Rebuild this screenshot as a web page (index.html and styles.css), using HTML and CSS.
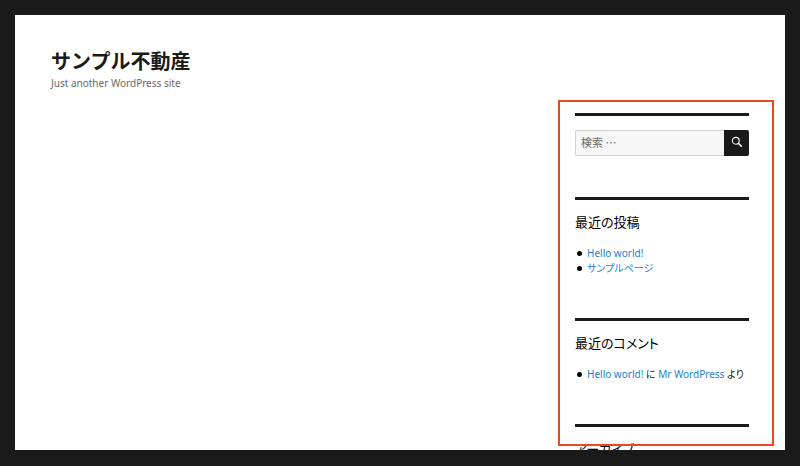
FILE: index.html
```html
<!DOCTYPE html>
<html lang="ja">
<head>
<meta charset="utf-8">
<title>サンプル不動産</title>
<link rel="stylesheet" href="styles.css">
</head>
<body>
<div class="page">
	<header class="site-header">
		<h1 class="site-title">サンプル不動産</h1>
		<p class="site-desc">Just another WordPress site</p>
	</header>
	<aside class="sidebar">
		<section class="widget widget-search">
			<form class="search">
				<input class="search-input" type="text" placeholder="検索 …">
				<button class="search-btn" type="button" aria-label="検索">
					<svg width="12" height="12" viewBox="0 0 12 12">
						<circle cx="4.8" cy="4.8" r="3.4" fill="none" stroke="#fff" stroke-width="1.1"/>
						<path d="M7.3 7.3 L10.8 10.8" stroke="#fff" stroke-width="1.6"/>
					</svg>
				</button>
			</form>
		</section>
		<section class="widget widget-posts">
			<h2 class="widget-title">最近の投稿</h2>
			<ul>
				<li><a href="#">Hello world!</a></li>
				<li><a href="#">サンプルページ</a></li>
			</ul>
		</section>
		<section class="widget widget-comments">
			<h2 class="widget-title">最近のコメント</h2>
			<ul>
				<li><a href="#">Hello world!</a> に <a href="#">Mr WordPress</a> より</li>
			</ul>
		</section>
		<section class="widget">
			<h2 class="widget-title">アーカイブ</h2>
		</section>
	</aside>
</div>
<div class="highlight"></div>
</body>
</html>
```

FILE: styles.css
```css
* {margin:0; padding:0; box-sizing:border-box}
html, body {height:100%; overflow:hidden}
body {background-color:#1a1a1a; padding:15px 15px 16px; font-family:"Noto Sans", "Noto Sans CJK JP", sans-serif; color:#1a1a1a}
a {color:#1a7fd4; text-decoration:none}
li {list-style:none}

.page {height:100%; background-color:#fff; overflow:hidden; padding:0 36px}

.site-header {padding-top:33px; height:85px}
.site-title {font-size:20px; line-height:26px; font-weight:700; font-family:"Noto Sans CJK JP", sans-serif}
.site-desc {font-size:10px; line-height:14px; margin-top:2px; color:#686868}

.sidebar {width:174px; margin-left:auto; padding-top:13px}
.widget {border-top:3px solid #1a1a1a}
.widget-search {height:84px; padding-top:14px}
.widget-posts {height:121px}
.widget-comments {height:106px}
.widget-title {font-size:13px; line-height:20px; font-weight:400; padding-top:12px; box-sizing:content-box; color:#000; font-family:"Noto Sans CJK JP", sans-serif; font-feature-settings:"palt"}

.widget ul {margin-top:14px; font-size:10px; line-height:15px; font-feature-settings:"palt"}
.widget li {position:relative; padding-left:12px; white-space:nowrap}
.widget li:before {content:""; position:absolute; left:2px; top:5px; width:5px; height:5px; border-radius:50%; background-color:#000}

.search {display:flex; height:26px}
.search-input {flex:1; min-width:0; border:1px solid #d1d1d1; border-right:0; border-radius:2px 0 0 2px; background-color:#f7f7f7; padding:0 5px 2px; font-size:11px; font-family:"Noto Sans CJK JP", sans-serif}
.search-input::placeholder {color:#686868; opacity:1}
.search-btn {width:25px; border:0; border-radius:0 2px 2px 0; background-color:#1a1a1a; display:flex; align-items:center; justify-content:center; padding-bottom:2px}

.highlight {position:absolute; left:558px; top:100px; width:216px; height:346px; border:2px solid #f0451f}
```
